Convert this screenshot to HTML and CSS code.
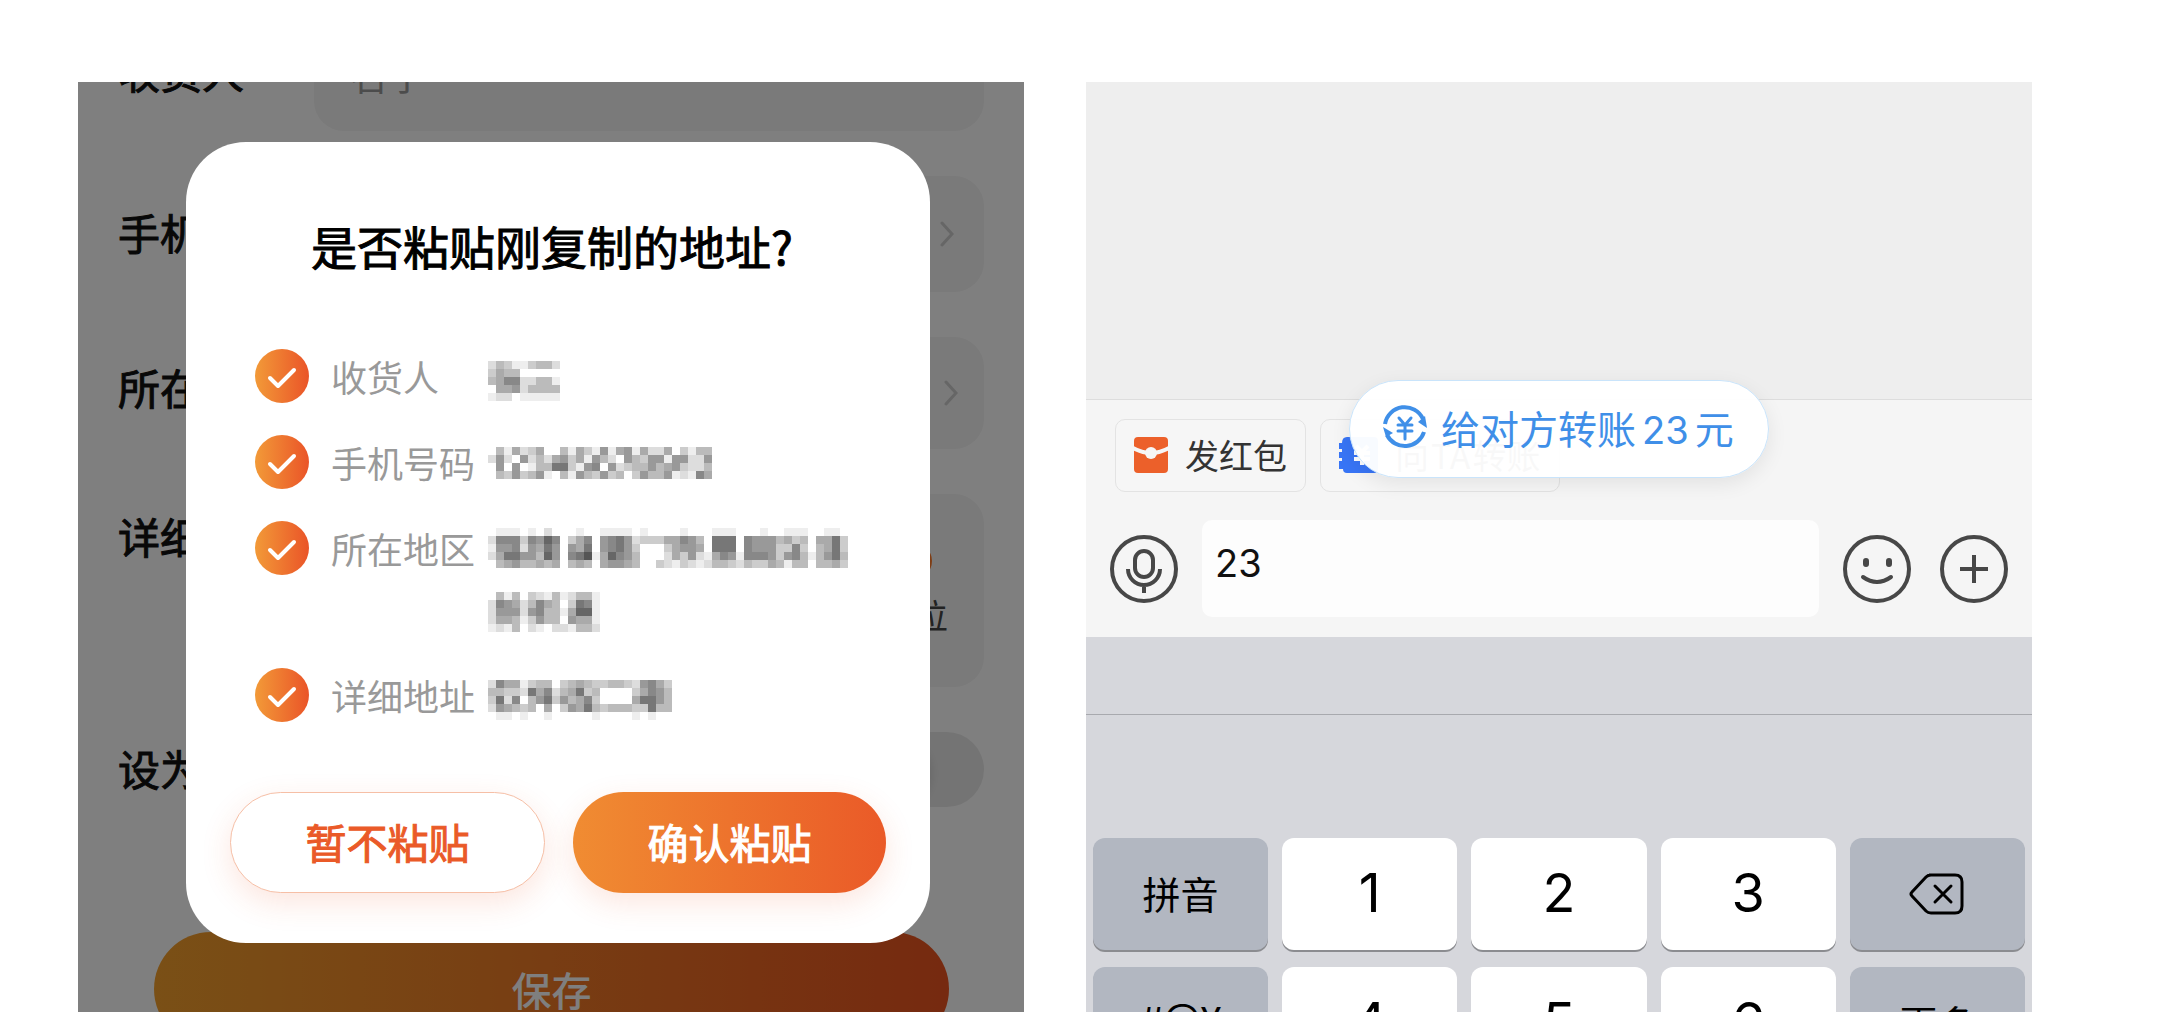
FILE: index.html
```html
<!DOCTYPE html>
<html lang="zh-CN">
<head>
    <meta charset="UTF-8">
    <title>剪贴板识别</title>
    <link rel="stylesheet" href="styles.css">
</head>
<body>
    <main class="screens">
        <!-- Address form -->
        <section class="screen address">
            <form class="form">
                <div class="row">
                    <label class="row-label" for="name">收货人</label>
                    <input class="field" id="name" type="text" placeholder="名字">
                </div>
                <div class="row">
                    <label class="row-label" for="phone">手机号码</label>
                    <button class="field field-link" id="phone" type="button">
                        <svg class="chevron" viewBox="0 0 14 26"><path d="M2 2l10 11L2 24"/></svg>
                    </button>
                </div>
                <div class="row row-top row-area">
                    <label class="row-label" for="area">所在地区</label>
                    <button class="field field-link field-area" id="area" type="button">
                        <svg class="chevron" viewBox="0 0 14 26"><path d="M2 2l10 11L2 24"/></svg>
                    </button>
                </div>
                <div class="row row-top">
                    <label class="row-label" for="locate">详细地址</label>
                    <div class="field field-detail">
                        <button class="locate" id="locate" type="button">
                            <span class="pin"></span>
                            定位
                        </button>
                    </div>
                </div>
                <div class="row row-switch">
                    <label class="row-label" for="default">设为默认</label>
                    <input class="switch" id="default" type="checkbox">
                </div>
                <button class="save-btn" type="button">保存</button>
            </form>

            <div class="mask"></div>

            <div class="modal" role="dialog" aria-labelledby="modalTitle">
                <h2 class="modal-title" id="modalTitle">是否粘贴刚复制的地址?</h2>
                <ul class="paste-list">
                    <li class="paste-item">
                        <span class="check">
                            <input type="checkbox" id="pName" checked>
                            <svg viewBox="0 0 54 54"><path d="M15 29l8 8 16-16"/></svg>
                        </span>
                        <label for="pName">收货人</label>
                        <div class="masked" data-key="name"></div>
                    </li>
                    <li class="paste-item">
                        <span class="check">
                            <input type="checkbox" id="pPhone" checked>
                            <svg viewBox="0 0 54 54"><path d="M15 29l8 8 16-16"/></svg>
                        </span>
                        <label for="pPhone">手机号码</label>
                        <div class="masked" data-key="phone"></div>
                    </li>
                    <li class="paste-item paste-item-tall">
                        <span class="check">
                            <input type="checkbox" id="pArea" checked>
                            <svg viewBox="0 0 54 54"><path d="M15 29l8 8 16-16"/></svg>
                        </span>
                        <label for="pArea">所在地区</label>
                        <div class="masked" data-key="area"></div>
                    </li>
                    <li class="paste-item">
                        <span class="check">
                            <input type="checkbox" id="pDetail" checked>
                            <svg viewBox="0 0 54 54"><path d="M15 29l8 8 16-16"/></svg>
                        </span>
                        <label for="pDetail">详细地址</label>
                        <div class="masked" data-key="detail"></div>
                    </li>
                </ul>
                <div class="modal-actions">
                    <button class="btn btn-plain" type="button">暂不粘贴</button>
                    <button class="btn btn-main" type="button">确认粘贴</button>
                </div>
            </div>
        </section>

        <!-- Chat with keyboard -->
        <section class="screen chat">
            <div class="messages"></div>

            <div class="toolbar">
                <div class="chips">
                    <button class="chip" type="button">
                        <svg class="chip-icon" viewBox="0 0 34 36">
                            <rect fill="#ec602a" width="34" height="36" rx="4"/>
                            <path fill="none" stroke="#f6f6f6" stroke-width="4" d="M-1 11q18 10 36 0"/>
                            <circle fill="#f6f6f6" cx="17" cy="16" r="6"/>
                        </svg>
                        发红包
                    </button>
                    <button class="chip" type="button">
                        <svg class="chip-icon chip-icon-wide" viewBox="0 0 39 36">
                            <path fill="#3875f6" d="M8 0h27a4 4 0 0 1 4 4v28a4 4 0 0 1-4 4H8q-4 0-4-4H0v-8h3v-3H0v-6h3v-3H0V6h3q0-6 5-6z"/>
                            <path fill="none" stroke="#fff" stroke-width="4" d="M17 9l6 6 6-6M23 15v13M15 16h16M15 22h16"/>
                        </svg>
                        <span>向<span class="latin">TA</span>转账</span>
                    </button>
                </div>

                <button class="transfer-tip" type="button">
                    <svg class="transfer-icon" viewBox="0 0 44 44">
                        <path d="M2 19A20 20 0 0 1 40 14"/>
                        <path d="M41 27A20 20 0 0 1 4 30"/>
                        <path class="solid" d="M35 17l7-6 2 12z"/>
                        <path class="solid" d="M0 22l10 6-7 4z"/>
                        <path class="yen" d="M16 13l6 7 6-7M22 20v14M15 20h14M15 26h14"/>
                    </svg>
                    <span>给对方转账<span class="amount">23</span>元</span>
                </button>

                <div class="input-row">
                    <button class="icon-btn" type="button" aria-label="语音">
                        <svg viewBox="0 0 68 68">
                            <circle cx="34" cy="34" r="32"/>
                            <rect x="25" y="16" width="18" height="26" rx="9"/>
                            <path d="M18 34a16 16 0 0 0 32 0M34 50v8"/>
                        </svg>
                    </button>
                    <input class="message-input" type="text" value="23" aria-label="消息">
                    <div class="icon-group">
                        <button class="icon-btn" type="button" aria-label="表情">
                            <svg viewBox="0 0 68 68">
                                <circle cx="34" cy="34" r="32"/>
                                <path class="eyes" d="M23 26v3M46 26v3"/>
                                <path stroke-linecap="round" d="M20 42q14 10 28 0"/>
                            </svg>
                        </button>
                        <button class="icon-btn" type="button" aria-label="更多">
                            <svg viewBox="0 0 68 68">
                                <circle cx="34" cy="34" r="32"/>
                                <path d="M34 20v28M20 34h28"/>
                            </svg>
                        </button>
                    </div>
                </div>
            </div>

            <div class="keyboard">
                <div class="candidates"></div>
                <div class="keys">
                    <button class="key key-fn" type="button">拼音</button>
                    <button class="key" type="button">1</button>
                    <button class="key" type="button">2</button>
                    <button class="key" type="button">3</button>
                    <button class="key key-fn" type="button" aria-label="删除">
                        <svg class="backspace" viewBox="0 0 56 42">
                            <path d="M20 2h26q7 0 7 7v24q0 7-7 7H22q-3 0-5-2L3 23q-2-2 0-4L17 4q2-2 5-2z"/>
                            <path d="M26 13l16 16M42 13L26 29"/>
                        </svg>
                    </button>
                    <button class="key key-fn" type="button">#@¥</button>
                    <button class="key" type="button">4</button>
                    <button class="key" type="button">5</button>
                    <button class="key" type="button">6</button>
                    <button class="key key-fn" type="button">更多</button>
                </div>
            </div>
        </section>
    </main>

    <script src="mosaic.js"></script>
</body>
</html>
```
FILE: styles.css
```css
:root {
    --orange: #ea5a28;
    --orange-light: #f08c32;
    --blue: #3f8fe8;
    --icon: #474747;
    --field-bg: #f4f4f4;
    --font: Inter, "Noto Sans CJK SC", sans-serif;
}

* {
    box-sizing: border-box;
}

body {
    margin: 0;
    height: 100vh;
    overflow: hidden;
    background: white;
    font-family: "Noto Sans CJK SC", sans-serif;
}

button,
input {
    margin: 0;
    padding: 0;
    border: none;
    font-family: inherit;
}

.screens {
    height: 100%;
    padding: 82px 140px 0 78px;
    display: grid;
    grid-template-columns: 1fr 1fr;
    gap: 62px;
}

.screen {
    position: relative;
    min-width: 0;
    min-height: 0;
    overflow: hidden;
}

/* Medium weight look for headings and buttons */
.row-label,
.modal-title,
.btn {
    -webkit-text-stroke: 1px currentColor;
}

/* Address form */
.form {
    margin-top: -67px;
    padding: 0 40px;
    display: flex;
    flex-direction: column;
    gap: 45px;
}

.row {
    display: flex;
    align-items: center;
}

.row-top {
    align-items: flex-start;
}

.row-label {
    width: 196px;
    padding-bottom: 4px;
    font-size: 42px;
    line-height: 84px;
    color: #111;
}

.row-area .row-label {
    padding-top: 8px;
}

.row-switch .row-label {
    line-height: 71px;
}

.field {
    flex: 1;
    min-width: 0;
    height: 116px;
    padding: 0 36px;
    border-radius: 30px;
    background: var(--field-bg);
    font-size: 38px;
}

.field::placeholder {
    color: #999;
}

.field-link {
    display: flex;
    align-items: center;
    justify-content: flex-end;
    padding-right: 30px;
}

.field-area {
    height: 112px;
    padding-right: 26px;
}

.chevron {
    width: 14px;
    height: 26px;
    fill: none;
    stroke: #ccc;
    stroke-width: 3;
    stroke-linecap: round;
}

.field-detail {
    height: 193px;
    display: flex;
    justify-content: flex-end;
    align-items: center;
}

.locate {
    display: flex;
    flex-direction: column;
    align-items: center;
    gap: 12px;
    background: none;
    font-size: 34px;
    line-height: 48px;
    color: #444;
}

.pin {
    width: 36px;
    height: 36px;
    border-radius: 50%;
    background: #ff7a28;
}

.switch {
    appearance: none;
    width: 126px;
    height: 75px;
    margin-left: auto;
    padding: 3px;
    border-radius: 38px;
    background: #e9e9e9;
}

.switch::before {
    content: "";
    display: block;
    width: 69px;
    height: 69px;
    border-radius: 50%;
    background: white;
    box-shadow: 0 4px 12px rgba(0, 0, 0, 0.15);
}

.save-btn {
    height: 114px;
    margin: 80px 35px 0 36px;
    border-radius: 57px;
    background: linear-gradient(90deg, #f4a02c, #ec5420);
    color: white;
    font-size: 40px;
    font-weight: 500;
}

.mask {
    position: absolute;
    inset: 0;
    background: rgba(0, 0, 0, 0.5);
}

/* Paste dialog */
.modal {
    position: absolute;
    top: 60px;
    left: 108px;
    right: 94px;
    padding: 69px 44px 50px;
    border-radius: 60px;
    background: white;
}

.modal-title {
    margin: 0;
    padding-right: 12px;
    text-align: center;
    font-size: 46px;
    line-height: 68px;
    font-weight: 400;
    color: black;
}

.paste-list {
    margin: 70px 0;
    padding: 0 25px;
    list-style: none;
    display: flex;
    flex-direction: column;
    gap: 32px;
}

.paste-item {
    height: 54px;
    display: flex;
    align-items: flex-start;
}

.paste-item-tall {
    height: 115px;
}

.paste-item label {
    width: 157px;
    font-size: 36px;
    line-height: 54px;
    color: #999;
}

.check {
    display: grid;
    margin-right: 22px;
}

.check input,
.check svg {
    grid-area: 1 / 1;
    width: 54px;
    height: 54px;
}

.check input {
    appearance: none;
    border-radius: 50%;
    border: 2px solid #ddd;
}

.check input:checked {
    border: none;
    background: linear-gradient(90deg, #f29a38, #ea5428);
}

.check svg {
    pointer-events: none;
    fill: none;
    stroke: white;
    stroke-width: 4;
    stroke-linecap: round;
    stroke-linejoin: round;
}

.masked {
    padding-top: 12px;
}

.paste-item-tall .masked {
    padding-top: 7px;
}

.masked svg {
    display: block;
}

.modal-actions {
    display: flex;
    gap: 28px;
}

.btn {
    flex: 1;
    height: 101px;
    padding-bottom: 4px;
    border-radius: 51px;
    font-size: 41px;
    box-shadow: 0 10px 30px rgba(234, 90, 40, 0.15);
}

.btn-plain {
    border: 1px solid #f6bfa6;
    background: white;
    color: var(--orange);
}

.btn-main {
    background: linear-gradient(90deg, var(--orange-light), var(--orange));
    color: white;
}

/* Chat */
.chat {
    display: flex;
    flex-direction: column;
    background: #eee;
}

.messages {
    flex: none;
    height: 317px;
}

.toolbar {
    position: relative;
    flex: none;
    padding: 19px 24px 20px;
    border-top: 1px solid #ddd;
    background: #f5f5f5;
}

.chips {
    display: flex;
    gap: 14px;
    padding-left: 5px;
    margin-bottom: 28px;
}

.chip {
    height: 73px;
    padding: 0 18px 2px;
    display: flex;
    align-items: center;
    gap: 17px;
    border: 1px solid #e3e3e3;
    border-radius: 10px;
    background: #f6f6f6;
    font-size: 34px;
    color: #333;
}

.chip-icon {
    width: 34px;
    height: 36px;
}

.chip-icon-wide {
    width: 39px;
}

.latin {
    margin: 0 2px;
}

.transfer-tip {
    position: absolute;
    top: -20px;
    left: 263px;
    height: 98px;
    padding: 0 34px 4px 33px;
    display: flex;
    align-items: center;
    gap: 14px;
    border: 1px solid #c9e4fb;
    border-radius: 49px;
    background: rgba(255, 255, 255, 0.97);
    box-shadow: 0 6px 20px rgba(0, 0, 0, 0.08);
    color: var(--blue);
    font-size: 39px;
}

.transfer-icon {
    width: 44px;
    height: 44px;
    fill: none;
    stroke: var(--blue);
    stroke-width: 4;
}

.transfer-icon .solid {
    fill: var(--blue);
    stroke: none;
}

.transfer-icon .yen {
    stroke-width: 3;
    stroke-linecap: round;
}

.amount {
    margin: 0 6px;
    font-family: var(--font);
    font-size: 38px;
}

.input-row {
    display: flex;
    align-items: center;
    gap: 24px;
}

.icon-group {
    display: flex;
    gap: 29px;
}

.icon-btn {
    width: 68px;
    height: 68px;
    background: none;
}

.icon-btn svg {
    display: block;
    fill: none;
    stroke: var(--icon);
    stroke-width: 4;
}

.icon-btn .eyes {
    stroke-width: 6;
    stroke-linecap: round;
}

.message-input {
    flex: 1;
    min-width: 0;
    height: 97px;
    padding: 0 13px 12px;
    border-radius: 10px;
    background: #fdfdfd;
    font-family: var(--font);
    font-size: 38px;
    color: #111;
}

/* Keyboard */
.keyboard {
    flex: none;
    background: #d6d7dc;
}

.candidates {
    height: 78px;
    border-bottom: 1px solid #a8a9ae;
}

.keys {
    padding: 123px 7px 7px;
    display: grid;
    grid-template-columns: repeat(5, 1fr);
    gap: 17px 14px;
}

.key {
    height: 112px;
    padding-bottom: 4px;
    border-radius: 12px;
    background: white;
    box-shadow: 0 2px 0 #8b8c90;
    font-family: var(--font);
    font-size: 54px;
    color: black;
}

.key-fn {
    background: #b2b7c1;
    font-size: 38px;
}

.backspace {
    display: block;
    width: 56px;
    height: 42px;
    margin: 4px auto 0;
    fill: none;
    stroke: black;
    stroke-width: 3;
    stroke-linecap: round;
}
```
FILE: mosaic.js
```js
// Pixelated values, one hex digit of grey per 8px cell
const CELL = 8;

const mosaics = {
    name: [
        'dbceecbbd',
        'cabbfffff',
        'ba88ddbbe',
        'faa9dbbbb',
        'eddfeeeee'
    ],
    phone: [
        'fbeadcaffbeace9ea9eaddafcebbf',
        'd9df9dbda9cae9bdf9bc99e99dd9f',
        'f9f9febb77ce98f9dcbb9ba9cddbf',
        'fbc9cb9efbe9bc9cbfc9bb9ede8af'
    ],
    area: [
        'feeefefdfffeffeeeefeffffefffeeefffeffeeeffeef',
        'd888c8968fca8f9879dcccaa89bf777f8999bacbfaa7c',
        'e998d9a79f9a7f9879cfffca99af777f8999cc8cfba7c',
        'da7799b69f875ea689bfffdac9dea89e8889c98beb97b',
        'fba9bbabafbabfa99abffcdecdedbbcdbccabebbfbbac',
        '', '', '',
        'fbebfcdebedbbe',
        'd89adb8abfc78e',
        'd999d98bbea66e',
        'daabec9bbf9aae',
        'edebfdefddebbd'
    ],
    detail: [
        'd8aaecbbfcbabccbbcd98ac',
        'bbccd7a8dba7cbffffca89b',
        'c7d8fb97c9ba8cffffa779b',
        'd9abcbfafc9a7bcbbbcc7bb',
        'feefeffefffffeffffefeff'
    ]
};

document.querySelectorAll('.masked').forEach(el => {
    const rows = mosaics[el.dataset.key];
    const width = Math.max(...rows.map(row => row.length)) * CELL;
    const height = rows.length * CELL;
    let cells = '';

    rows.forEach((row, y) => {
        [...row].forEach((shade, x) => {
            if (shade === 'f') return;
            cells += `<rect x="${x * CELL}" y="${y * CELL}" width="${CELL}" height="${CELL}" fill="#${shade.repeat(3)}"/>`;
        });
    });

    el.innerHTML = `<svg width="${width}" height="${height}" shape-rendering="crispEdges">${cells}</svg>`;
});
```
